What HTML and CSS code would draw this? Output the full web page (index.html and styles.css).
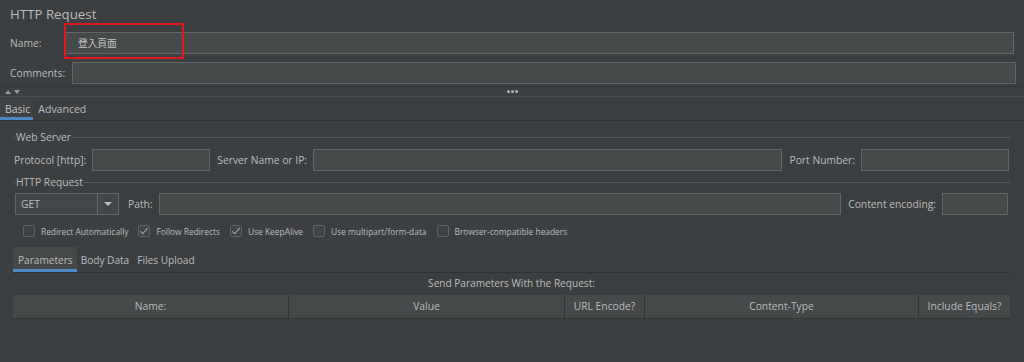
FILE: index.html
```html
<!DOCTYPE html>
<html>
<head>
<meta charset="utf-8">
<link rel="stylesheet" href="styles.css">
</head>
<body>
<div class="top">
  <div class="title">HTTP Request</div>
  <div class="row name-row">
    <label class="lbl name-lbl">Name:</label>
    <div class="input name-input">登入頁面</div>
  </div>
  <div class="row comments-row">
    <label class="lbl comments-lbl">Comments:</label>
    <div class="input comments-input"></div>
  </div>
  <div class="highlight"></div>
</div>
<div class="splitter">
  <div class="arrows"><span class="tri up"></span><span class="tri down"></span></div>
  <div class="dots"><span></span><span></span><span></span></div>
</div>
<div class="tabs">
  <div class="tab active">Basic</div>
  <div class="tab">Advanced</div>
</div>
<div class="panel">
  <div class="legend first"><span class="pre"></span><span class="ltext">Web Server</span><span class="post"></span></div>
  <div class="row frow server-row">
    <label class="lbl">Protocol [http]:</label>
    <div class="input proto"></div>
    <label class="lbl">Server Name or IP:</label>
    <div class="input grow"></div>
    <label class="lbl">Port Number:</label>
    <div class="input port"></div>
  </div>
  <div class="legend second"><span class="pre"></span><span class="ltext">HTTP Request</span><span class="post"></span></div>
  <div class="row frow">
    <div class="combo"><span class="cval">GET</span><span class="cbtn"><span class="carrow"></span></span></div>
    <label class="lbl">Path:</label>
    <div class="input grow"></div>
    <label class="lbl">Content encoding:</label>
    <div class="input enc"></div>
  </div>
  <div class="checks">
    <div class="chk"><span class="box"></span>Redirect Automatically</div>
    <div class="chk"><span class="box checked"></span>Follow Redirects</div>
    <div class="chk"><span class="box checked"></span>Use KeepAlive</div>
    <div class="chk"><span class="box"></span>Use multipart/form-data</div>
    <div class="chk"><span class="box"></span>Browser-compatible headers</div>
  </div>
  <div class="subtabs">
    <div class="stab active">Parameters</div>
    <div class="stab">Body Data</div>
    <div class="stab">Files Upload</div>
  </div>
  <div class="send">Send Parameters With the Request:</div>
  <div class="thead">
    <div class="th">Name:</div>
    <div class="th">Value</div>
    <div class="th">URL Encode?</div>
    <div class="th">Content-Type</div>
    <div class="th">Include Equals?</div>
  </div>
</div>
</body>
</html>
```

FILE: styles.css
```css
html, body {
  margin: 0;
  padding: 0;
  background: #3c3f41;
  color: #bbbbbb;
  font-family: "Open Sans", "Noto Sans CJK TC", sans-serif;
  font-size: 10.3px;
  width: 1024px;
  height: 362px;
  overflow: hidden;
}
.top {
  position: relative;
  padding: 0 0 0 10px;
  height: 86px;
}
.title {
  font-size: 13.3px;
  height: 32px;
  line-height: 28px;
}
.row {
  display: flex;
  align-items: center;
}
.lbl {
  white-space: nowrap;
}
.input {
  height: 20px;
  background: #45494a;
  border: 1px solid #646464;
  box-sizing: content-box;
  display: flex;
  align-items: center;
  padding-left: 4px;
}
.name-lbl { width: 55px; flex: none; }
.name-input {
  flex: 1;
  margin-right: 10px;
  font-size: 9.7px;
  padding-left: 12px;
  color: #c4c4c4;
}
.comments-row { margin-top: 8px; }
.comments-lbl { width: 62px; flex: none; }
.comments-input { flex: 1; margin-right: 8px; }
.highlight {
  position: absolute;
  left: 64px;
  top: 23px;
  width: 116px;
  height: 32px;
  border: 2px solid #e3151d;
}
.splitter {
  height: 9px;
  border-top: 1px solid #333537;
  border-bottom: 1px solid #4b4e50;
  position: relative;
  display: flex;
  align-items: center;
}
.arrows {
  display: flex;
  gap: 3px;
  margin-left: 5px;
}
.tri {
  width: 0;
  height: 0;
  border-left: 3px solid transparent;
  border-right: 3px solid transparent;
}
.tri.up { border-bottom: 4px solid #9a9a9a; }
.tri.down { border-top: 4px solid #9a9a9a; }
.dots {
  position: absolute;
  left: 507px;
  top: 3px;
  display: flex;
  gap: 1px;
}
.dots span {
  width: 3px;
  height: 3px;
  border-radius: 50%;
  background: #b0b0b0;
}
.tabs {
  display: flex;
  height: 23px;
  border-bottom: 1px solid #323232;
}
.tab {
  padding: 0 3px 0 5px;
  line-height: 25px;
  font-size: 10.5px;
}
.tab.active {
  background: #3f4244;
  border-bottom: 3px solid #4a88c7;
  height: 20px;
  color: #c6c6c6;
}
.panel {
  padding: 0 14px 0 13px;
}
.legend {
  display: flex;
  align-items: center;
  height: 14px;
}
.legend.first { margin-top: 9px; }
.legend.second { margin-top: 4px; }
.legend .pre { width: 2px; height: 1px; background: #555859; }
.legend .post { flex: 1; height: 1px; background: #555859; margin-left: 1px; }
.legend .ltext { padding-left: 1px; }
.frow {
  margin-top: 4px;
  height: 22px;
  gap: 6px;
}
.frow.server-row { margin-top: 5px; }
.frow .lbl { margin-left: 1px; }
.proto { width: 112px; }
.port { width: 142px; margin-right: 1px; }
.grow { flex: 1; }
.enc { width: 60px; margin-right: 2px; }
.combo {
  margin-left: 2px;
  width: 102px;
  height: 20px;
  border: 1px solid #646464;
  background: #43474a;
  display: flex;
  margin-right: 2px;
}
.cval {
  flex: 1;
  padding-left: 5px;
  line-height: 20px;
  border-right: 1px solid #646464;
}
.cbtn {
  width: 20px;
  display: flex;
  align-items: center;
  justify-content: center;
}
.carrow {
  width: 0;
  height: 0;
  border-left: 4px solid transparent;
  border-right: 4px solid transparent;
  border-top: 4px solid #bbbbbb;
}
.checks {
  display: flex;
  align-items: center;
  margin-top: 10px;
  margin-left: 10px;
  height: 12px;
  gap: 10px;
  font-size: 8.4px;
}
.chk {
  display: flex;
  align-items: center;
  gap: 6px;
}
.box {
  width: 10px;
  height: 10px;
  border: 1px solid #5f6263;
  border-radius: 2px;
  background: #3f4345;
  position: relative;
}
.box.checked::after {
  content: "";
  position: absolute;
  left: 3px;
  top: 0px;
  width: 3px;
  height: 7px;
  border-right: 1.5px solid #a9a9a9;
  border-bottom: 1.5px solid #a9a9a9;
  transform: rotate(40deg);
}
.subtabs {
  display: flex;
  margin-top: 10px;
  height: 25px;
  border-bottom: 1px solid #323232;
  font-size: 10.1px;
}
.stab {
  padding: 0 4px;
  line-height: 26px;
}
.stab.active {
  background: #45494a;
  border-bottom: 3px solid #4a88c7;
  height: 22px;
  padding: 0 4px 0 5px;
}
.send {
  text-align: center;
  margin-top: 3px;
  height: 19px;
  line-height: 14px;
  font-size: 10.1px;
}
.thead {
  display: grid;
  grid-template-columns: 276px 276px 80px 274px 91px;
  height: 23px;
  background: #45494a;
  border-bottom: 1px solid #333537;
}
.th {
  text-align: center;
  line-height: 23px;
  border-right: 1px solid #333537;
}
.th:last-child { border-right: none; }
```
